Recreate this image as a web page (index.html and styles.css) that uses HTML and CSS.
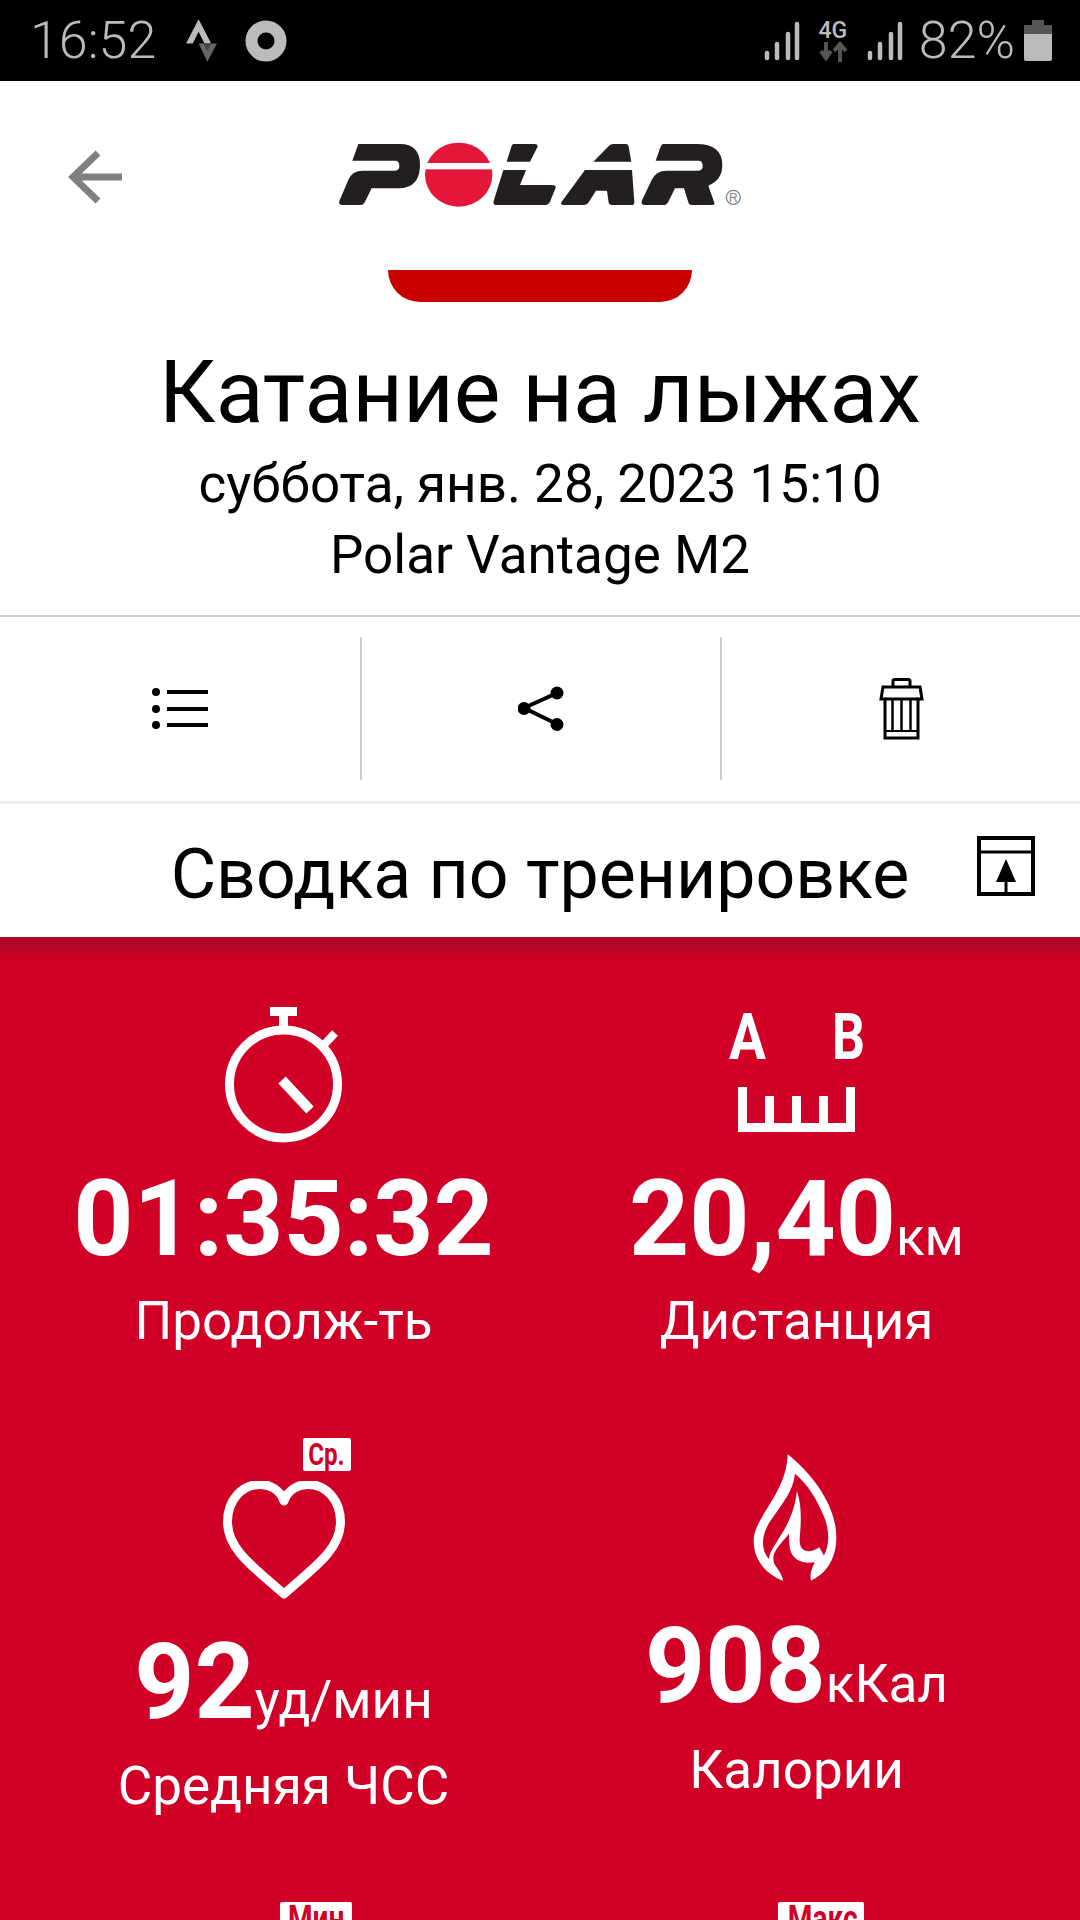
FILE: index.html
```html
<!DOCTYPE html>
<html lang="ru">
<head>
<meta charset="utf-8">
<title>Polar</title>
<link rel="stylesheet" href="styles.css">
</head>
<body>
<div class="status">
  <div class="status-left">
    <span class="clock">16:52</span>
    <svg class="ic-strava" viewBox="0 0 32 44"><path d="M13 0 L26 25 H19 L13 13 L7 25 H0 Z" fill="#bbb"/><path d="M13 25 H32 L22 44 Z" fill="#666"/><path d="M18 25 H26 L22 33 Z" fill="#444"/></svg>
    <svg class="ic-ring" viewBox="0 0 42 42"><circle cx="21" cy="21" r="14.5" fill="none" stroke="#bbb" stroke-width="12"/></svg>
  </div>
  <div class="status-right">
    <svg class="ic-signal" viewBox="0 0 36 40"><g stroke="#bbb" stroke-width="4.5" stroke-linecap="round"><path d="M3 37V32"/><path d="M13 37V23"/><path d="M24 37V13"/><path d="M33 37V3"/></g></svg>
    <div class="net"><span class="net-label">4G</span><svg class="ic-arrows" viewBox="0 0 30 20"><path d="M8 0V13M3 9L8 16L13 9" stroke="#555" stroke-width="4" fill="none"/><path d="M22 20V5M16 9L22 2L28 9" stroke="#555" stroke-width="4" fill="none"/></svg></div>
    <svg class="ic-signal" viewBox="0 0 36 40"><g stroke="#bbb" stroke-width="4.5" stroke-linecap="round"><path d="M3 37V32"/><path d="M13 37V23"/><path d="M24 37V13"/><path d="M33 37V3"/></g></svg>
    <span class="batt-text">82%</span>
    <svg class="ic-batt" viewBox="0 0 28 41"><path d="M8 0H20V5H28V14H0V5H8Z" fill="#555"/><path d="M0 14H28V39Q28 41 26 41H2Q0 41 0 39Z" fill="#bbb"/></svg>
  </div>
</div>

<header class="brand">
  <svg class="ic-back" viewBox="0 0 54 54"><path d="M54 27H5M30 3L5 27L30 51" fill="none" stroke="#808080" stroke-width="7"/></svg>
  <svg class="logo" viewBox="0 0 1320 300">
    <g fill="#231f20">
      <path d="M115 72H240Q300 72 300 135Q300 205 235 205H155L135 245Q130 255 120 255H68Q55 255 58 243L85 180Q95 152 130 152H225Q238 152 238 138Q238 122 225 122H97Z"/>
      <path d="M580 72H645Q655 72 652 82L630 125H560L574 80Q577 72 580 72Z"/>
      <path d="M550 150H618L600 195H695Q712 195 705 208L690 245Q685 255 672 255H530Q518 255 521 243Z"/>
      <path d="M880 72H918Q925 72 926 80L934 125H820L860 85Q870 72 880 72Z"/>
      <path d="M795 150H936L943 245Q944 255 934 255H875Q868 255 866 248L861 212H828L805 248Q800 255 790 255H732Q720 255 725 245Z"/>
      <path d="M1030 72H1130Q1207 72 1207 135Q1207 180 1165 197L1183 248Q1185 255 1175 255H1115Q1108 255 1106 250L1092 205H1065L1045 245Q1040 255 1030 255H975Q962 255 965 243L995 180Q1008 152 1040 152H1135Q1148 152 1148 138Q1148 122 1135 122H1007L1020 85Q1025 72 1030 72Z"/>
    </g>
    <ellipse cx="416" cy="164" rx="101" ry="96" fill="#e4173a"/>
    <rect x="310" y="129" width="212" height="19" fill="#fff"/>
    <circle cx="1240" cy="232" r="21" fill="none" stroke="#808080" stroke-width="4"/>
    <text class="logo-r" x="1240" y="245" text-anchor="middle">R</text>
  </svg>
  <span class="brand-spacer"></span>
</header>

<div class="tab"></div>

<section class="title-block">
  <h1 class="title">Катание на лыжах</h1>
  <p class="sub">суббота, янв. 28, 2023 15:10</p>
  <p class="sub sub-device">Polar Vantage M2</p>
</section>

<nav class="actions">
  <div class="action">
    <svg class="ic-list" viewBox="0 0 56 44"><g fill="#000"><ellipse cx="4" cy="5" rx="4" ry="4"/><ellipse cx="4" cy="22" rx="4" ry="4"/><ellipse cx="4" cy="38" rx="4" ry="4"/><rect x="15" y="3" width="41" height="4"/><rect x="15" y="20" width="41" height="4"/><rect x="15" y="36" width="41" height="4"/></g></svg>
  </div>
  <div class="action">
    <svg class="ic-share" viewBox="0 0 46 46"><path d="M39 7L6 22L39 38" fill="none" stroke="#000" stroke-width="4"/><circle cx="39" cy="7" r="6.5"/><circle cx="6" cy="22.5" r="6.5"/><circle cx="39" cy="38.5" r="6.5"/></svg>
  </div>
  <div class="action">
    <svg class="ic-trash" viewBox="0 0 45 62"><g fill="none" stroke="#000" stroke-width="3"><path d="M14 9V3Q14 1.5 16 1.5H29Q31 1.5 31 3V9"/><path d="M2 21L4 9H41L43 21H39V60H6V21Z"/><path d="M6 21H39"/></g><g stroke="#000" stroke-width="2.5"><path d="M13.500 20V53"/><path d="M22.500 20V53"/><path d="M31.500 20V53"/></g><path d="M6 53H39" stroke="#000" stroke-width="2"/></svg>
  </div>
</nav>

<div class="section-head">
  <span class="section-spacer"></span>
  <h2 class="section-title">Сводка по тренировке</h2>
  <svg class="ic-export" viewBox="0 0 58 60"><g fill="none" stroke="#000"><rect x="2" y="2" width="54" height="56" stroke-width="4"/><path d="M2 16H56" stroke-width="3"/></g><path d="M29 23L39 46H19Z"/><path d="M29 45V58" stroke="#000" stroke-width="3"/></svg>
</div>

<main class="stats">
  <div class="stat">
    <svg class="ic-stat ic-watch" viewBox="0 0 130 136"><g fill="none" stroke="#fff" stroke-width="9"><circle cx="58.500" cy="77" r="54"/><path d="M58.500 9V20"/><path d="M97 40L110 26" stroke-width="8"/><path d="M57 73L85 103" stroke-width="10"/></g><rect x="45" y="0" width="27" height="9" fill="#fff"/></svg>
    <div class="value">01:35:32</div>
    <div class="label">Продолж-ть</div>
  </div>
  <div class="stat">
    <svg class="ic-stat ic-dist" viewBox="0 -21 136 139"><text class="ab" x="0" y="45" textLength="37" lengthAdjust="spacingAndGlyphs">A</text><text class="ab" x="103" y="45" textLength="33" lengthAdjust="spacingAndGlyphs">B</text><path d="M9 73V118H126V73H117V109H99V82H90V109H72V82H63V109H45V82H36V109H18V73Z" fill="#fff"/></svg>
    <div class="value">20,40<span class="unit">км</span></div>
    <div class="label">Дистанция</div>
  </div>
  <div class="stat stat-lower">
    <div class="heart-wrap">
      <svg class="ic-stat ic-heart" viewBox="0 0 122 118"><path d="M61 20C57 8 46 3.500 37 3.500C18 3.500 4.500 20 4.500 41C4.500 69 32 87 61 113C90 87 117.500 69 117.500 41C117.500 20 104 3.500 85 3.500C76 3.500 65 8 61 20Z" fill="none" stroke="#fff" stroke-width="9" stroke-linejoin="round"/></svg>
      <span class="badge badge-avg"><span class="badge-text">Ср.</span></span>
    </div>
    <div class="value">92<span class="unit">уд/мин</span></div>
    <div class="label">Средняя ЧСС</div>
  </div>
  <div class="stat stat-lower">
    <svg class="ic-stat ic-flame" viewBox="1240 95 196 392" preserveAspectRatio="none"><path fill="#fff" fill-rule="evenodd" d="M1322 102C1380 165 1428 260 1428 350C1428 410 1410 455 1373 480C1370 465 1372 450 1381 425C1355 430 1335 420 1328 390C1325 375 1325 355 1325 340C1300 380 1285 400 1293 430C1300 445 1310 460 1312 480C1275 460 1248 420 1248 360C1248 290 1320 220 1322 102ZM1338 160C1335 210 1310 250 1285 300C1265 340 1262 385 1281 415C1285 370 1335 320 1342 212C1355 260 1350 320 1348 360C1348 395 1370 400 1391 380L1401 405C1415 370 1412 320 1400 285C1385 235 1365 190 1338 160Z"/></svg>
    <div class="value">908<span class="unit">кКал</span></div>
    <div class="label">Калории</div>
  </div>
  <div class="stat stat-row3"><span class="badge badge-min"><span class="badge-text">Мин</span></span></div>
  <div class="stat stat-row3"><span class="badge badge-max"><span class="badge-text">Макс</span></span></div>
</main>
</body>
</html>
```
FILE: styles.css
```css
* { box-sizing: border-box; }
html, body { margin: 0; padding: 0; width: 1080px; height: 1920px; overflow: hidden; background: #fff; }
body { font-family: Roboto, "Noto Sans", sans-serif; color: #000; display: flex; flex-direction: column; }

.status { height: 81px; flex: none; background: #000; color: #bbb; display: flex; justify-content: space-between; align-items: center; padding: 0 28px 0 30px; }
.status-left, .status-right { display: flex; align-items: center; }
.clock, .batt-text { font-size: 52px; font-weight: 300; line-height: 81px; }
.ic-strava { width: 31px; height: 43px; margin-left: 30px; }
.ic-ring { width: 42px; height: 42px; margin-left: 28px; }
.ic-signal { width: 36px; height: 40px; }
.net { width: 30px; margin: 0 19px 0 18px; display: flex; flex-direction: column; align-items: center; }
.net-label { font-size: 23px; font-weight: 500; line-height: 22px; }
.ic-arrows { width: 30px; height: 20px; }
.batt-text { margin-left: 16px; }
.ic-batt { width: 28px; height: 41px; margin-left: 9px; }

.brand { height: 189px; flex: none; display: grid; grid-template-columns: 1fr 440px 1fr; align-items: start; }
.ic-back { width: 54px; height: 54px; margin: 69px 0 0 68px; }
.logo { width: 440px; height: 100px; margin-top: 39px; display: block; }
.logo-r { font: 36px "Liberation Sans", sans-serif; fill: #808080; }

.tab { width: 304px; height: 32px; flex: none; margin: 0 auto; background: #c80000; border-radius: 0 0 32px 32px; }

.title-block { height: 315px; flex: none; text-align: center; padding-top: 41px; border-bottom: 2px solid #ccc; }
.title { margin: 0 0 8px; font-size: 88px; font-weight: 400; line-height: 98px; }
.sub { margin: 0; font-size: 53px; line-height: 71px; }

.actions { height: 187px; flex: none; display: grid; grid-template-columns: 362px 360px 358px; padding: 20px 0; border-bottom: 3px solid #eee; }
.action { display: flex; align-items: center; justify-content: center; height: 143px; border-right: 2px solid #ccc; }
.action:last-child { border-right: 0; }
.ic-list { width: 56px; height: 44px; }
.ic-share { width: 46px; height: 46px; }
.ic-trash { width: 45px; height: 62px; }

.section-head { height: 133px; flex: none; display: grid; grid-template-columns: 1fr auto 1fr; align-items: center; padding-top: 8px; }
.section-title { margin: 0; font-size: 69.800px; font-weight: 400; line-height: 125px; }
.ic-export { width: 58px; height: 60px; justify-self: end; margin: 0 45px 18px 0; }

.stats { flex: 1; min-height: 0; overflow: hidden; background: linear-gradient(#a80a25, #d00027 24px); display: grid; grid-template-columns: 513px 513px; grid-auto-rows: min-content; padding: 70px 27px 0; color: #fff; text-align: center; }
.stat { display: flex; flex-direction: column; align-items: center; height: 431px; }
.ic-stat { display: block; flex: none; }
.ic-watch { width: 130px; height: 136px; margin: 0 0 22px 12px; }
.ic-dist { width: 136px; height: 139px; margin: -14px 0 33px; }
.ab { font: 700 64px Roboto, sans-serif; fill: #fff; }
.value { font-size: 105px; font-weight: 700; line-height: 110px; }
.unit { font-size: 53px; font-weight: 400; line-height: 0; }
.label { font-size: 53px; line-height: 70px; margin-top: 11px; }
.stat-lower .label { margin-top: 13px; }

.heart-wrap { position: relative; width: 122px; height: 118px; margin: 43px 0 29px; flex: none; }
.ic-heart { width: 122px; height: 118px; }
.badge { background: #fff; color: #d00027; font-weight: 700; border-radius: 2px; display: block; text-align: center; flex: none; }
.badge-text { display: inline-block; transform: scaleX(.78); }
.badge-avg { position: absolute; left: 80px; top: -43px; width: 48px; height: 33px; font-size: 31px; line-height: 33px; }
.ic-flame { width: 90px; height: 131px; margin: 14px 3px 29px 0; }
.stat-row3 { height: 51px; }
.badge-min { width: 72px; height: 60px; font-size: 36px; line-height: 34px; margin: 33px 0 0 64px; }
.badge-max { width: 86px; height: 60px; font-size: 36px; line-height: 34px; margin: 33px 0 0 48px; }
```
